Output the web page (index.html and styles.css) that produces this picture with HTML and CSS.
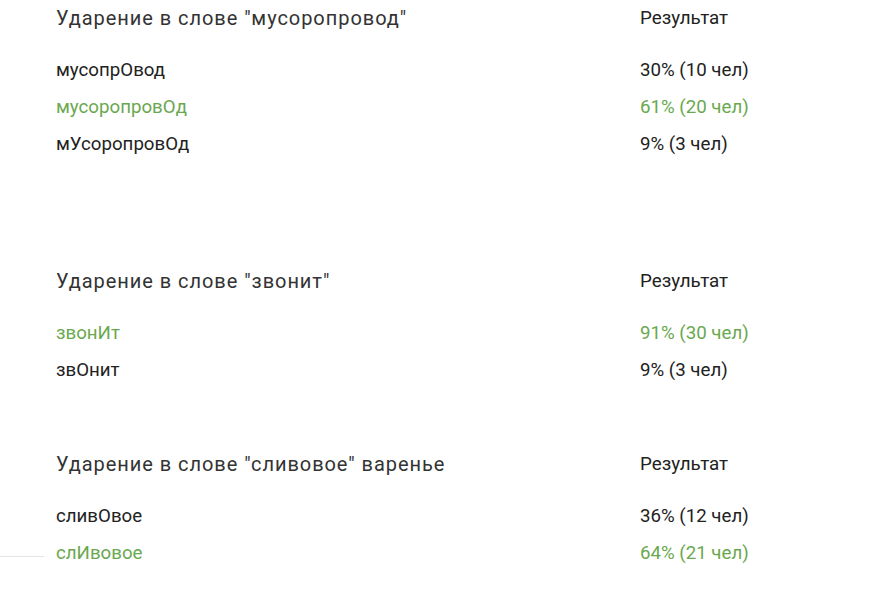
FILE: index.html
```html
<!DOCTYPE html>
<html lang="ru">
<head>
<meta charset="utf-8">
<link rel="stylesheet" href="styles.css">
</head>
<body>
<div class="page">
  <section class="poll poll-first">
    <div class="q">Ударение в слове "мусоропровод"</div>
    <div class="rh">Результат</div>
    <div class="a">мусопрОвод</div><div class="r">30% (10 чел)</div>
    <div class="a ok">мусоропровОд</div><div class="r ok">61% (20 чел)</div>
    <div class="a">мУсоропровОд</div><div class="r">9% (3 чел)</div>
  </section>
  <section class="poll poll-second">
    <div class="q">Ударение в слове "звонит"</div>
    <div class="rh">Результат</div>
    <div class="a ok">звонИт</div><div class="r ok">91% (30 чел)</div>
    <div class="a">звОнит</div><div class="r">9% (3 чел)</div>
  </section>
  <section class="poll poll-third">
    <div class="q">Ударение в слове "сливовое" варенье</div>
    <div class="rh">Результат</div>
    <div class="a">сливОвое</div><div class="r">36% (12 чел)</div>
    <div class="a ok">слИвовое</div><div class="r ok">64% (21 чел)</div>
  </section>
  <div class="edge"></div>
</div>
</body>
</html>
```
FILE: styles.css
```css
html, body {
  margin: 0;
  padding: 0;
  background: #fff;
}
body {
  font-family: Roboto, "Noto Sans", sans-serif;
  color: #222;
  width: 874px;
  height: 594px;
  overflow: hidden;
}
.page {
  position: relative;
  height: 594px;
}
.poll {
  display: grid;
  grid-template-columns: 584px auto;
  padding-left: 56px;
}
.poll-second { margin-top: 100px; }
.poll-third { margin-top: 57px; }
.q {
  font-size: 20px;
  line-height: 36px;
  letter-spacing: 0.95px;
  color: #333;
  margin-bottom: 16px;
}
.rh {
  font-size: 18.8px;
  line-height: 36px;
  color: #222;
  margin-bottom: 16px;
}
.a, .r {
  font-size: 18.7px;
  line-height: 37px;
  color: #222;
}
.ok { color: #6aa84f; }
.edge {
  position: absolute;
  left: 0;
  top: 556px;
  width: 44px;
  height: 1px;
  background: #e3e5ea;
}
```
